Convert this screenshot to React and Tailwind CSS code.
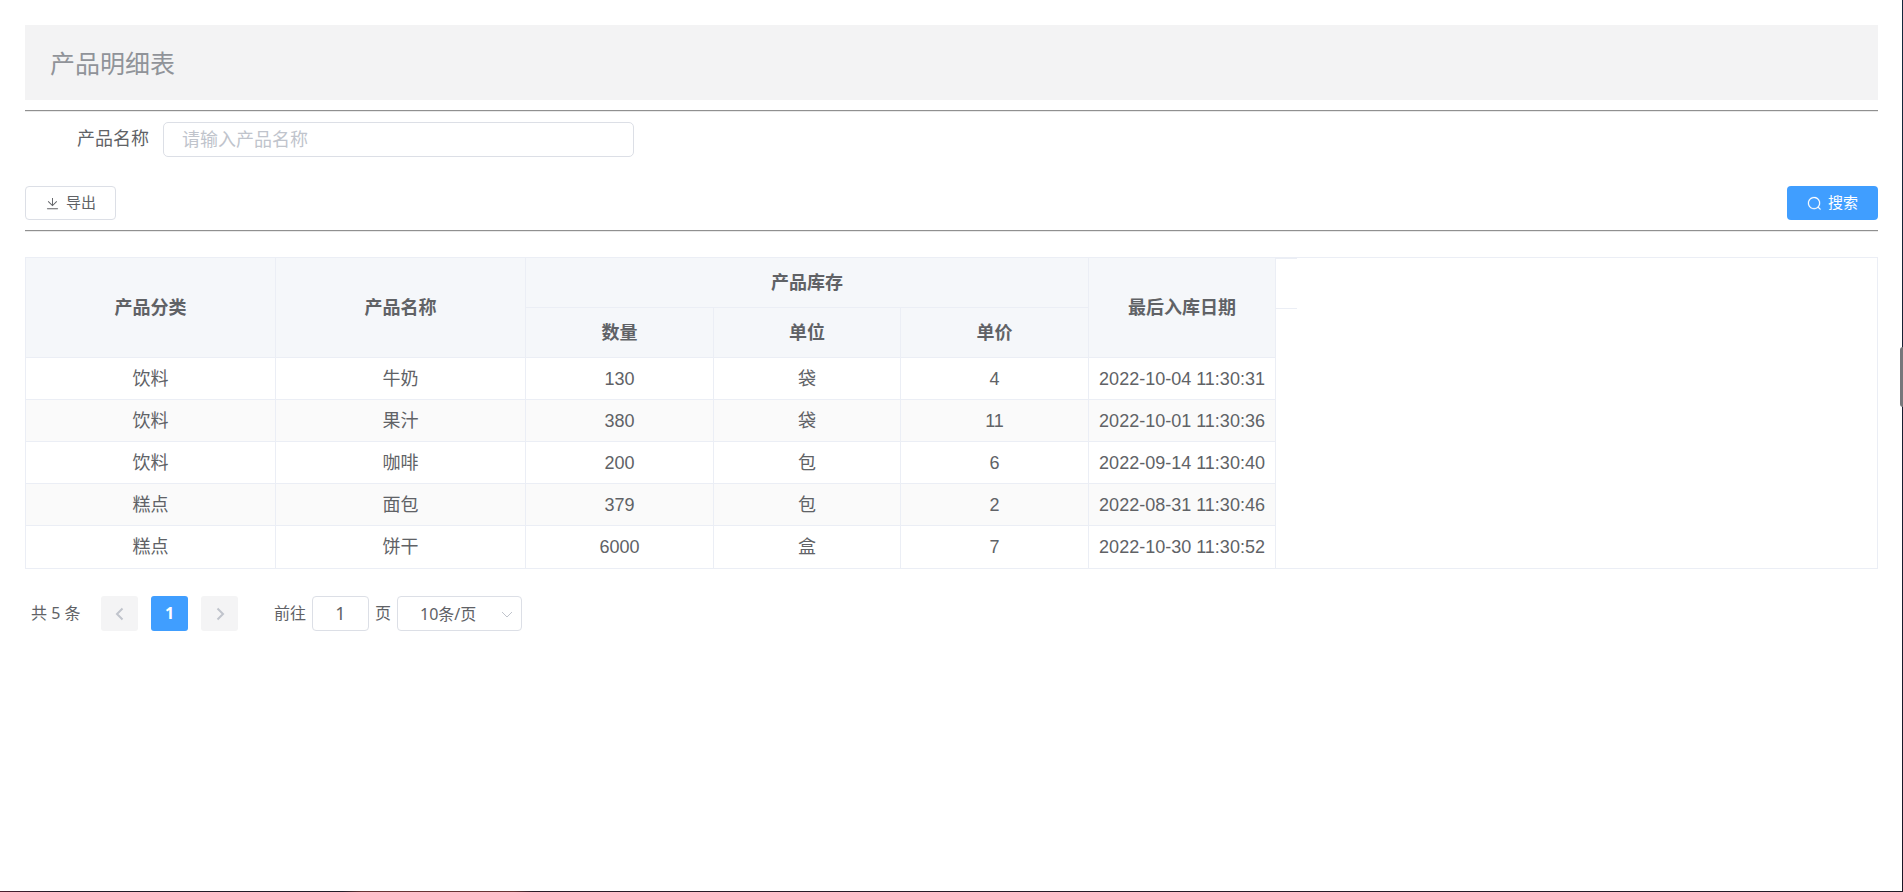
const rows = [
  ['饮料', '牛奶', '130', '袋', '4', '2022-10-04 11:30:31'],
  ['饮料', '果汁', '380', '袋', '11', '2022-10-01 11:30:36'],
  ['饮料', '咖啡', '200', '包', '6', '2022-09-14 11:30:40'],
  ['糕点', '面包', '379', '包', '2', '2022-08-31 11:30:46'],
  ['糕点', '饼干', '6000', '盒', '7', '2022-10-30 11:30:52'],
];

function DownloadIcon() {
  return (
    <svg viewBox="0 0 1024 1024" className="size-[15px]" fill="currentColor" aria-hidden="true">
      <path d="M160 832h704a32 32 0 1 1 0 64H160a32 32 0 1 1 0-64zm384-253.696 236.288-236.352 45.248 45.248L508.8 704 192 387.2l45.248-45.248L480 584.704V128h64v450.304z" />
    </svg>
  );
}

function SearchIcon() {
  return (
    <svg viewBox="0 0 1024 1024" className="size-[15px]" fill="currentColor" stroke="currentColor" strokeWidth="16" aria-hidden="true">
      <path d="m795.904 750.72 124.992 124.928a32 32 0 0 1-45.248 45.248L750.656 795.904a416 416 0 1 1 45.248-45.248zM480 832a352 352 0 1 0 0-704 352 352 0 0 0 0 704z" />
    </svg>
  );
}

function Chevron({ d, className }) {
  return (
    <svg viewBox="0 0 16 16" className={className} fill="none" stroke="currentColor" aria-hidden="true">
      <path d={d} />
    </svg>
  );
}

function Th({ children, ...rest }) {
  return (
    <th
      className="border-r border-b border-[#ebeef5] bg-[#f5f7fa] p-0 text-center font-bold"
      {...rest}
    >
      {children}
    </th>
  );
}

function Rule() {
  return <hr className="h-[2px] border-t border-b border-t-[#909090] border-b-[#eaeaea]" />;
}

export default function App() {
  return (
    <div className="relative flex min-h-screen flex-col bg-white font-['Liberation_Sans','Noto_Sans_CJK_SC',sans-serif] text-[#606266]">
      <main className="flex-1 p-[25px]">
        <header className="flex h-[75px] items-center bg-[#f3f3f4] px-[25px] pt-[2px]">
          <h1 className="text-[25px] leading-8 text-[#909399]">产品明细表</h1>
        </header>

        <div className="mt-[10px]">
          <Rule />
        </div>

        <form className="mt-[10px]">
          <div className="flex items-center">
            <label htmlFor="product" className="w-[138px] pr-[14px] text-right text-[18px] leading-[35px]">
              产品名称
            </label>
            <input
              id="product"
              type="text"
              placeholder="请输入产品名称"
              className="h-[35px] w-1/4 max-w-[471px] min-w-60 grow rounded-[5px] border border-[#dcdfe6] px-[18px] pt-[2px] text-[18px] outline-none placeholder:text-[#c0c4cc]"
            />
          </div>
          <div className="mt-[29px] mb-[10px] flex justify-between">
            <button
              type="button"
              className="flex h-[34px] w-[91px] items-center justify-center gap-[6px] rounded-[4px] border border-[#dcdfe6] text-[15px]"
            >
              <DownloadIcon />
              导出
            </button>
            <button
              type="submit"
              className="flex h-[34px] w-[91px] items-center justify-center gap-[6px] rounded-[4px] bg-[#409eff] text-[15px] text-white"
            >
              <SearchIcon />
              搜索
            </button>
          </div>
        </form>

        <Rule />

        <div className="mt-[25px] border border-[#ebeef5]">
          <table className="w-[1271px] table-fixed border-separate border-spacing-0 text-[18px] leading-6">
            <colgroup>
              <col className="w-[250px]" />
              <col className="w-[250px]" />
              <col className="w-[188px]" />
              <col className="w-[187px]" />
              <col className="w-[188px]" />
              <col className="w-[187px]" />
              <col className="w-[21px]" />
            </colgroup>
            <thead>
              <tr className="h-[50px]">
                <Th rowSpan={2}>产品分类</Th>
                <Th rowSpan={2}>产品名称</Th>
                <Th colSpan={3}>产品库存</Th>
                <Th rowSpan={2}>最后入库日期</Th>
                <td className="border-t border-[#ebeef5] p-0" />
              </tr>
              <tr className="h-[50px]">
                <Th>数量</Th>
                <Th>单位</Th>
                <Th>单价</Th>
                <td className="border-t border-[#ebeef5] p-0" />
              </tr>
            </thead>
            <tbody>
              {rows.map((row) => (
                <tr key={row[1]} className="group h-[42px] even:bg-[#fafafa]">
                  {row.map((cell, i) => (
                    <td
                      key={i}
                      className="border-r border-b border-[#ebeef5] p-0 text-center whitespace-nowrap group-last:border-b-0"
                    >
                      {cell}
                    </td>
                  ))}
                  <td className="bg-white p-0" />
                </tr>
              ))}
            </tbody>
          </table>
        </div>

        <nav
          aria-label="分页"
          className="mt-[27px] flex items-center pl-[6px] font-['Noto_Sans','Noto_Sans_CJK_SC',sans-serif] text-[16px] leading-[35px]"
        >
          <span className="w-[70px]">共 5 条</span>
          <div className="flex gap-[13px]">
            <button
              type="button"
              aria-label="上一页"
              disabled
              className="flex h-[35px] w-[37px] items-center justify-center rounded-[3px] bg-[#f4f4f5] text-[#c0c4cc]"
            >
              <Chevron d="M10.500 2.500 5 8l5.500 5.500" className="size-4 stroke-2" />
            </button>
            <button
              type="button"
              aria-current="page"
              className="flex h-[35px] w-[37px] items-center justify-center rounded-[3px] bg-[#409eff] font-bold text-white"
            >
              1
            </button>
            <button
              type="button"
              aria-label="下一页"
              disabled
              className="flex h-[35px] w-[37px] items-center justify-center rounded-[3px] bg-[#f4f4f5] text-[#c0c4cc]"
            >
              <Chevron d="m5.500 2.500 5.500 5.500-5.500 5.500" className="size-4 stroke-2" />
            </button>
          </div>
          <label className="ml-[36px] flex items-center gap-[6px]">
            前往
            <input
              type="text"
              defaultValue="1"
              aria-label="前往页码"
              className="h-[35px] w-[57px] rounded-[4px] border border-[#dcdfe6] text-center text-[18px] outline-none"
            />
            页
          </label>
          <div className="relative ml-[6px] flex">
            <select
              aria-label="每页条数"
              className="h-[35px] w-[125px] appearance-none rounded-[4px] border border-[#dcdfe6] bg-white pl-[22px] text-[16px] outline-none"
            >
              <option>10条/页</option>
              <option>20条/页</option>
              <option>50条/页</option>
            </select>
            <Chevron d="m3 6 5 5 5-5" className="pointer-events-none absolute top-[10px] right-[7px] size-4 text-[#c0c4cc]" />
          </div>
        </nav>
      </main>
      <div className="absolute inset-y-0 right-0 w-px bg-linear-to-b from-[#14283c] to-[#1a1626]" />
      <div className="absolute inset-x-0 bottom-0 h-px bg-[linear-gradient(90deg,#4a2030_0,#221c28_3%,#221c28_18%,#663434_19%,#663434_27%,#2a1c28_28%,#221c28_100%)]" />
      <div className="absolute top-[347px] right-0 h-[60px] w-[3px] rounded-l-[3px] bg-[#77777b]" />
    </div>
  );
}
